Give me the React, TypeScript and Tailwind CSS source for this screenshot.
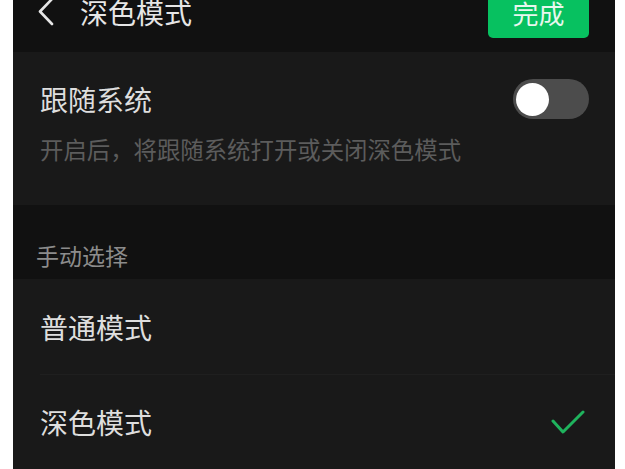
import { useState } from 'react';

const font = { fontFamily: '"Noto Sans CJK SC", "Noto Sans", sans-serif' };

function Toggle({ on, onChange }: { on: boolean; onChange: () => void }) {
  return (
    <button
      onClick={onChange}
      className={`relative w-[76px] h-[40px] rounded-full ${on ? 'bg-[#07c160]' : 'bg-[#4c4c4c]'}`}
    >
      <span
        className={`absolute top-[3.5px] w-[33px] h-[33px] rounded-full bg-white ${on ? 'right-[3px]' : 'left-[3px]'}`}
      />
    </button>
  );
}

function Check() {
  return (
    <svg width="34" height="26" viewBox="0 0 34 26" fill="none">
      <polyline points="2,12 12,23 32,3" stroke="#1fb35d" strokeWidth="3" strokeLinecap="round" strokeLinejoin="round" />
    </svg>
  );
}

export default function App() {
  const [follow, setFollow] = useState(false);
  const [mode, setMode] = useState<'normal' | 'dark'>('dark');

  const modes: { id: 'normal' | 'dark'; label: string }[] = [
    { id: 'normal', label: '普通模式' },
    { id: 'dark', label: '深色模式' },
  ];

  return (
    <div className="w-[625px] h-[469px] bg-white overflow-hidden" style={font}>
      <div className="ml-[13px] w-[602px] h-full bg-[#191919] flex flex-col">
        {/* header */}
        <div className="h-[52px] shrink-0 bg-[#111111] flex items-start pl-[24px] pr-[26px] overflow-hidden">
          <div className="flex items-center h-[26px] -mt-[1px]">
            <svg width="22" height="28" viewBox="0 0 22 28" fill="none">
              <polyline points="15,1 3,13.5 15,26" stroke="#e6e6e6" strokeWidth="2.6" strokeLinecap="round" strokeLinejoin="round" />
            </svg>
            <span className="ml-[21px] text-[28px] leading-[26px] text-[#e6e6e6]">深色模式</span>
          </div>
          <button className="ml-auto -mt-[10px] h-[48px] w-[101px] rounded-[5px] bg-[#07c160] flex items-center justify-center pb-[2px]">
            <span className="text-[26px] leading-[30px] text-[#e8f7ee]">完成</span>
          </button>
        </div>

        {/* follow system */}
        <div className="pl-[27px] pr-[26px] pt-[27px] pb-[40px]">
          <div className="flex items-center justify-between h-[40px]">
            <span className="text-[28px] leading-[40px] text-[#dedede]">跟随系统</span>
            <Toggle on={follow} onChange={() => setFollow(!follow)} />
          </div>
          <p className="mt-[14px] text-[23.4px] leading-[32px] text-[#5c5c5c]">开启后，将跟随系统打开或关闭深色模式</p>
        </div>

        {/* section label */}
        <div className="bg-[#111111] pl-[23px] pt-[34px] pb-[8px]">
          <span className="text-[23px] leading-[32px] text-[#8c8c8c]">手动选择</span>
        </div>

        {/* modes */}
        <div className="flex-1 pl-[27px]">
          {modes.map((m, i) => (
            <div
              key={m.id}
              onClick={() => setMode(m.id)}
              className={`h-[95px] flex items-center justify-between pr-[30px] ${i > 0 ? 'border-t border-[#1f1f1f]' : ''}`}
            >
              <span className="text-[28px] text-[#dedede]">{m.label}</span>
              {mode === m.id && <Check />}
            </div>
          ))}
        </div>
      </div>
    </div>
  );
}
